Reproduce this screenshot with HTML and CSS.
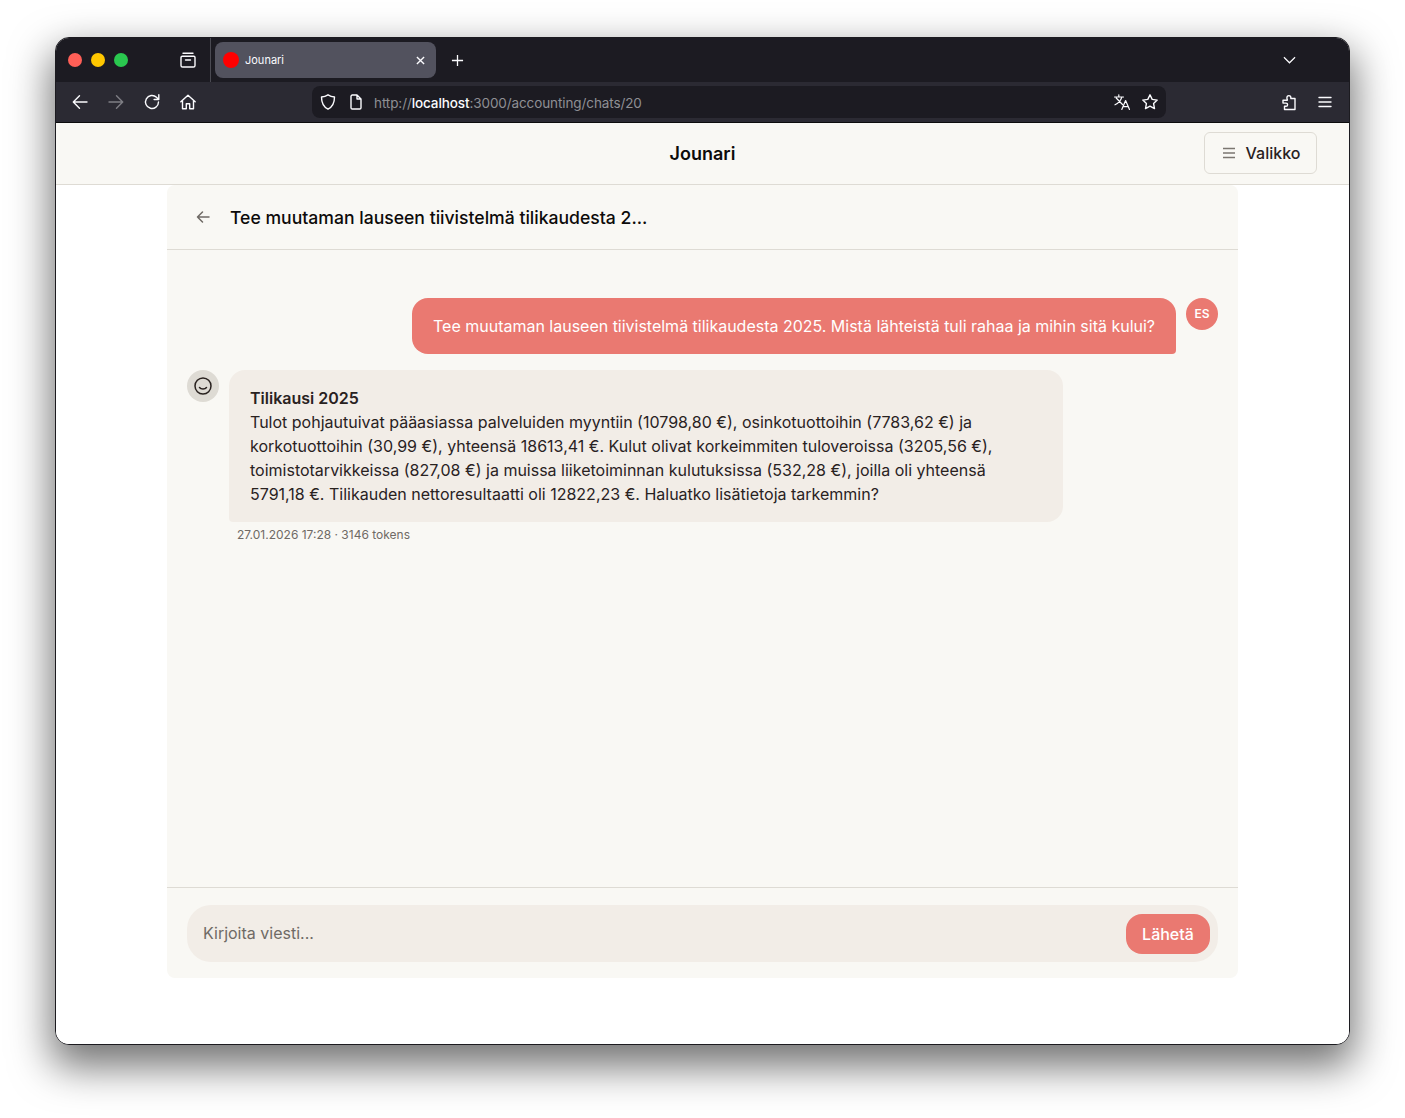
FILE: index.html
```html
<!DOCTYPE html>
<html lang="fi">
<head>
    <meta charset="UTF-8">
    <meta name="viewport" content="width=device-width, initial-scale=1.0">
    <title>Jounari</title>
    <link rel="stylesheet" href="styles.css">
</head>
<body>

    <div class="window">
        <div class="tabstrip">
            <div class="lights">
                <span class="light light-red"></span>
                <span class="light light-yellow"></span>
                <span class="light light-green"></span>
            </div>
            <div class="strip-tool">
                <svg class="icon" viewBox="0 0 18 18"><path d="M4 2.200h10M3.200 5.200h11.600a1.200 1.200 0 0 1 1.200 1.200v8a1.600 1.600 0 0 1-1.600 1.600H3.600A1.600 1.600 0 0 1 2 14.400v-8a1.200 1.200 0 0 1 1.200-1.200zM6.500 9h5"/></svg>
            </div>
            <div class="tab">
                <span class="favicon"></span>
                <span class="tab-title">Jounari</span>
                <svg class="tab-close" viewBox="0 0 10 10"><path d="M1 1l8 8M9 1l-8 8"/></svg>
            </div>
            <svg class="new-tab" viewBox="0 0 14 14"><path d="M7 1v12M1 7h12"/></svg>
            <svg class="tabs-menu" viewBox="0 0 14 8"><path d="M1 1l6 6 6-6"/></svg>
        </div>

        <div class="navbar">
            <div class="nav-buttons">
                <svg class="icon" viewBox="0 0 18 18"><path d="M16 9H2.500M8.500 2.800L2.300 9l6.200 6.200"/></svg>
                <svg class="icon icon-off" viewBox="0 0 18 18"><path d="M2 9h13.500M9.500 2.800L15.700 9l-6.200 6.200"/></svg>
                <svg class="icon" viewBox="0 0 18 18"><path d="M15.500 9a6.500 6.500 0 1 1-2-4.700L15.500 6.200M15.800 1.800v4.700h-4.700"/></svg>
                <svg class="icon" viewBox="0 0 18 18"><path d="M1.800 8.800L9 2.200l7.200 6.600M3.500 7.500v8.300h3.800v-5h3.400v5h3.800V7.500"/></svg>
            </div>
            <div class="urlbar">
                <svg class="icon" viewBox="0 0 18 18"><path d="M9 1.800c2 1.300 4 2 6.500 2.200 0 5.500-1.800 9.800-6.500 12.200C4.300 13.800 2.500 9.500 2.500 4 5 3.800 7 3.100 9 1.800z"/></svg>
                <svg class="icon icon-page" viewBox="0 0 18 18"><path d="M4 3.300A1.300 1.300 0 0 1 5.300 2h4.700l4 4v8.700a1.300 1.300 0 0 1-1.300 1.300H5.300A1.300 1.300 0 0 1 4 14.700zM10 2v4h4"/></svg>
                <span class="url"><span class="url-dim">http://</span><span class="url-host">localhost</span><span class="url-dim">:3000/accounting/chats/20</span></span>
                <svg class="icon icon-translate" viewBox="0 0 18 18"><path d="M1.500 4h9M5.800 1.800V4M3.200 5l6.300 6.500M8.700 4.500C7.500 8 5 10.500 2 11.800M8.800 16.500l3.800-9 3.900 9M10 13.700h5.300"/></svg>
                <svg class="icon" viewBox="0 0 18 18"><path d="M9 1.800l2.200 4.600 5 .7-3.600 3.500.9 5L9 13.200l-4.500 2.400.9-5L1.800 7.100l5-.7z"/></svg>
            </div>
            <div class="nav-right">
                <svg class="icon" viewBox="0 0 18 18"><path d="M15 5.500V16.500H4.500V13.300H6a1.600 1.600 0 0 0 0-3.200H3V7.300H6.800C7.300 7.300 7.500 6.900 7.300 6.500 7 6 6.900 5.500 6.900 5 6.900 3.600 7.700 2.600 8.900 2.600S10.900 3.600 10.900 5C10.900 5.200 10.900 5.400 10.800 5.500z"/></svg>
                <svg class="icon" viewBox="0 0 18 18"><path d="M3 4.500h12M3 9h12M3 13.500h12"/></svg>
            </div>
        </div>

        <div class="page">
            <header class="app-header">
                <h1>Jounari</h1>
                <button class="menu-btn">
                    <svg viewBox="0 0 16 16"><path d="M2 3.500h12M2 8h12M2 12.500h12"/></svg>
                    Valikko
                </button>
            </header>

            <main class="chat">
                <div class="chat-head">
                    <svg class="back" viewBox="0 0 16 16"><path d="M14 8H2.500M7.500 3L2.500 8l5 5"/></svg>
                    <h2>Tee muutaman lauseen tiivistelmä tilikaudesta 2...</h2>
                </div>

                <div class="messages">
                    <div class="msg msg-user">
                        <div class="bubble bubble-user">Tee muutaman lauseen tiivistelmä tilikaudesta 2025. Mistä lähteistä tuli rahaa ja mihin sitä kului?</div>
                        <div class="avatar avatar-user">ES</div>
                    </div>

                    <div class="msg">
                        <div class="avatar avatar-bot">
                            <svg viewBox="0 0 20 20"><circle cx="10" cy="10" r="8"/><path d="M6.500 11.500c1.500 2 5.500 2 7 0"/></svg>
                        </div>
                        <div class="msg-body">
                            <div class="bubble bubble-bot">
                                <strong>Tilikausi 2025</strong><br>
                                Tulot pohjautuivat pääasiassa palveluiden myyntiin (10798,80 €), osinkotuottoihin (7783,62 €) ja korkotuottoihin (30,99 €), yhteensä 18613,41 €. Kulut olivat korkeimmiten tuloveroissa (3205,56 €), toimistotarvikkeissa (827,08 €) ja muissa liiketoiminnan kulutuksissa (532,28 €), joilla oli yhteensä 5791,18 €. Tilikauden nettoresultaatti oli 12822,23 €. Haluatko lisätietoja tarkemmin?
                            </div>
                            <div class="meta">27.01.2026 17:28 · 3146 tokens</div>
                        </div>
                    </div>
                </div>

                <div class="composer">
                    <form class="composer-box">
                        <input type="text" placeholder="Kirjoita viesti...">
                        <button type="button" class="send-btn">Lähetä</button>
                    </form>
                </div>
            </main>
        </div>
    </div>

</body>
</html>
```

FILE: styles.css
```css
* {
    box-sizing: border-box;
}
body {
    margin: 0;
    padding: 37px 55px 73px;
    background-color: #fff;
    font-family: Inter, "Liberation Sans", sans-serif;
}
h1, h2 {
    margin: 0;
}
.window {
    height: 1008px;
    display: flex;
    flex-direction: column;
    border: 1px solid #1c1b20;
    border-radius: 14px;
    overflow: hidden;
    background-color: #fff;
    box-shadow: 0 18px 40px 4px rgba(0, 0, 0, 0.55);
}
.icon {
    width: 18px;
    height: 18px;
    flex: none;
    fill: none;
    stroke: #fbfbfe;
    stroke-width: 1.400;
    stroke-linecap: round;
    stroke-linejoin: round;
}
.icon-off {
    opacity: 0.4;
}

/* browser chrome */
.tabstrip {
    height: 44px;
    display: flex;
    align-items: center;
    background-color: #1c1b22;
}
.lights {
    display: flex;
    gap: 9px;
    margin-left: 12px;
}
.light {
    width: 14px;
    height: 14px;
    border-radius: 50%;
}
.light-red {
    background-color: #ff5f57;
}
.light-yellow {
    background-color: #ffc700;
}
.light-green {
    background-color: #2ac84f;
}
.strip-tool {
    width: 83px;
    height: 44px;
    padding-right: 13px;
    display: flex;
    align-items: center;
    justify-content: flex-end;
    border-right: 1px solid #4a4a52;
    margin-right: 4px;
    flex: none;
}
.tab {
    width: 221px;
    height: 36px;
    display: flex;
    align-items: center;
    padding: 0 11px 0 8px;
    background-color: #52525e;
    border-radius: 8px;
}
.favicon {
    width: 16px;
    height: 16px;
    border-radius: 50%;
    background-color: #ff0000;
    margin-right: 6px;
}
.tab-title {
    flex: 1;
    color: #fbfbfe;
    font-size: 11px;
}
.tab-close {
    width: 9px;
    height: 9px;
    fill: none;
    stroke: #fbfbfe;
    stroke-width: 1.500;
}
.new-tab {
    width: 13px;
    height: 13px;
    margin-left: 15px;
    fill: none;
    stroke: #fbfbfe;
    stroke-width: 1.400;
}
.tabs-menu {
    width: 13px;
    height: 8px;
    margin-left: auto;
    margin-right: 53px;
    fill: none;
    stroke: #fbfbfe;
    stroke-width: 1.300;
}
.navbar {
    height: 41px;
    flex: none;
    display: flex;
    align-items: center;
    background-color: #2b2a33;
    border-bottom: 1px solid #0c0c0d;
}
.nav-buttons {
    width: 256px;
    display: flex;
    gap: 18px;
    padding-left: 15px;
    flex: none;
}
.urlbar {
    width: 854px;
    height: 32px;
    display: flex;
    align-items: center;
    padding: 0 7px;
    background-color: #1c1b22;
    border-radius: 8px;
}
.icon-page {
    margin-left: 10px;
}
.url {
    flex: 1;
    margin-left: 9px;
    padding-top: 2px;
    font-size: 13.500px;
    letter-spacing: -0.100px;
}
.url-dim {
    color: #8f8f94;
}
.url-host {
    color: #fbfbfe;
    font-weight: 500;
}
.icon-translate {
    margin-right: 10px;
    stroke-width: 1.200;
}
.nav-right {
    display: flex;
    gap: 18px;
    margin-left: 114px;
}

/* app */
.page {
    flex: 1;
    min-height: 0;
    display: flex;
    flex-direction: column;
    background-color: #fff;
}
.app-header {
    height: 62px;
    flex: none;
    display: flex;
    align-items: center;
    justify-content: center;
    position: relative;
    background-color: #f9f8f4;
    border-bottom: 1px solid #dedbd4;
}
.app-header h1 {
    font-size: 18px;
    font-weight: 600;
    color: #0d0b0a;
}
.menu-btn {
    position: absolute;
    right: 32px;
    top: 9px;
    width: 113px;
    height: 42px;
    display: flex;
    align-items: center;
    justify-content: center;
    gap: 9px;
    background: transparent;
    border: 1px solid #dedbd4;
    border-radius: 6px;
    font-family: inherit;
    font-size: 16px;
    font-weight: 500;
    color: #29221f;
}
.menu-btn svg {
    width: 16px;
    height: 16px;
    fill: none;
    stroke: #7b7670;
    stroke-width: 1.500;
}
.chat {
    width: 1071px;
    height: 793px;
    margin: 0 auto;
    display: flex;
    flex-direction: column;
    background-color: #f9f8f4;
    border-radius: 8px;
}
.chat-head {
    height: 65px;
    flex: none;
    display: flex;
    align-items: center;
    gap: 19px;
    padding-left: 28px;
    border-bottom: 1px solid #dedbd4;
}
.chat-head h2 {
    font-size: 17.600px;
    font-weight: 500;
    color: #0d0b0a;
}
.back {
    width: 16px;
    height: 16px;
    fill: none;
    stroke: #6f6a65;
    stroke-width: 1.500;
    stroke-linecap: round;
    stroke-linejoin: round;
}
.messages {
    flex: 1;
    padding: 48px 20px 0;
    display: flex;
    flex-direction: column;
    gap: 16px;
}
.msg {
    display: flex;
    align-items: flex-start;
    gap: 10px;
}
.msg-user {
    justify-content: flex-end;
}
.avatar {
    width: 32px;
    height: 32px;
    flex: none;
    display: flex;
    align-items: center;
    justify-content: center;
    border-radius: 50%;
}
.avatar-user {
    padding-bottom: 2px;
    background-color: #ea7971;
    color: #fff;
    font-size: 12px;
    font-weight: 600;
}
.avatar-bot {
    background-color: #dedbd4;
}
.avatar-bot svg {
    width: 20px;
    height: 20px;
    fill: none;
    stroke: #29221f;
    stroke-width: 1.500;
    stroke-linecap: round;
}
.bubble {
    padding: 16px 21px;
    font-size: 16px;
    line-height: 24px;
    border-radius: 16px;
}
.bubble-user {
    background-color: #ea7971;
    color: #fff;
    letter-spacing: -0.010px;
    border-bottom-right-radius: 4px;
}
.msg-body {
    width: 834px;
}
.bubble-bot {
    background-color: #f2ede7;
    color: #29221f;
    border-bottom-left-radius: 4px;
}
.bubble-bot strong {
    font-weight: 600;
}
.meta {
    margin: 5px 0 0 8px;
    font-size: 12px;
    color: #6f6a65;
}
.composer {
    height: 91px;
    flex: none;
    padding: 17px 20px 0;
    border-top: 1px solid #dedbd4;
}
.composer-box {
    height: 57px;
    display: flex;
    align-items: center;
    padding: 0 8px 0 14px;
    background-color: #f2ede7;
    border-radius: 24px;
}
.composer-box input {
    flex: 1;
    min-width: 0;
    margin-bottom: 1px;
    border: none;
    outline: none;
    background: transparent;
    font-family: inherit;
    font-size: 16px;
    color: #29221f;
}
.composer-box input::placeholder {
    color: #6f6a65;
}
.send-btn {
    width: 84px;
    height: 40px;
    margin-top: 1px;
    border: none;
    border-radius: 16px;
    background-color: #ea7971;
    color: #fff;
    font-family: inherit;
    font-size: 16px;
    font-weight: 500;
}
```
